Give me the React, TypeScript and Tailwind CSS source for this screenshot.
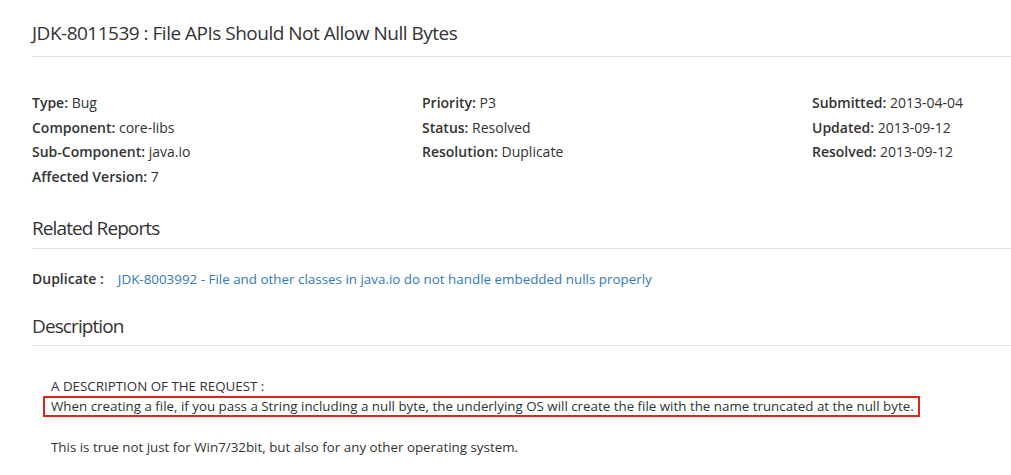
export default function App() {
  const fields: [string, string][][] = [
    [
      ['Type', 'Bug'],
      ['Component', 'core-libs'],
      ['Sub-Component', 'java.io'],
      ['Affected Version', '7'],
    ],
    [
      ['Priority', 'P3'],
      ['Status', 'Resolved'],
      ['Resolution', 'Duplicate'],
    ],
    [
      ['Submitted', '2013-04-04'],
      ['Updated', '2013-09-12'],
      ['Resolved', '2013-09-12'],
    ],
  ];

  return (
    <div className="w-[1011px] h-[475px] overflow-hidden bg-white text-[#333] font-['Open_Sans',sans-serif]">
      <div className="pl-[32px]">
        {/* Title */}
        <h1 className="pt-[20px] pb-[10px] text-[19px] tracking-[-0.5px] leading-[26px] font-normal border-b border-[#d9e2ea]">
          JDK-8011539 : File APIs Should Not Allow Null Bytes
        </h1>

        {/* Fields */}
        <div className="grid grid-cols-[390px_390px_1fr] pt-[34px] text-[14px] leading-[24.5px]">
          {fields.map((col, i) => (
            <div key={i}>
              {col.map(([k, v]) => (
                <div key={k}>
                  <span className="font-semibold">{k}:</span> {v}
                </div>
              ))}
            </div>
          ))}
        </div>

        {/* Related Reports */}
        <h2 className="mt-[25px] pb-[6px] text-[19px] tracking-[-0.9px] leading-[28px] font-normal border-b border-[#d9e2ea]">
          Related Reports
        </h2>
        <div className="pt-[18px] text-[14px] leading-[24px] flex">
          <span className="font-semibold">Duplicate :</span>
          <a className="ml-[14px] text-[13.4px] text-[#337ab7]" href="#">
            JDK-8003992 - File and other classes in java.io do not handle embedded nulls properly
          </a>
        </div>

        {/* Description */}
        <h2 className="mt-[21px] pb-[5px] text-[19px] tracking-[-0.9px] leading-[28px] font-normal border-b border-[#d9e2ea]">
          Description
        </h2>
        <div className="pt-[30px] pl-[19px] text-[13.35px] leading-[20px]">
          <div>A DESCRIPTION OF THE REQUEST :</div>
          <div className="-ml-[8px] w-[877px] border-2 border-[#e2231a] pl-[6px] leading-[17px]">
            When creating a file, if you pass a String including a null byte, the underlying OS will create the file with the name truncated at the null byte.
          </div>
          <div className="h-[20px]" />
          <div>This is true not just for Win7/32bit, but also for any other operating system.</div>
        </div>
      </div>
    </div>
  );
}
